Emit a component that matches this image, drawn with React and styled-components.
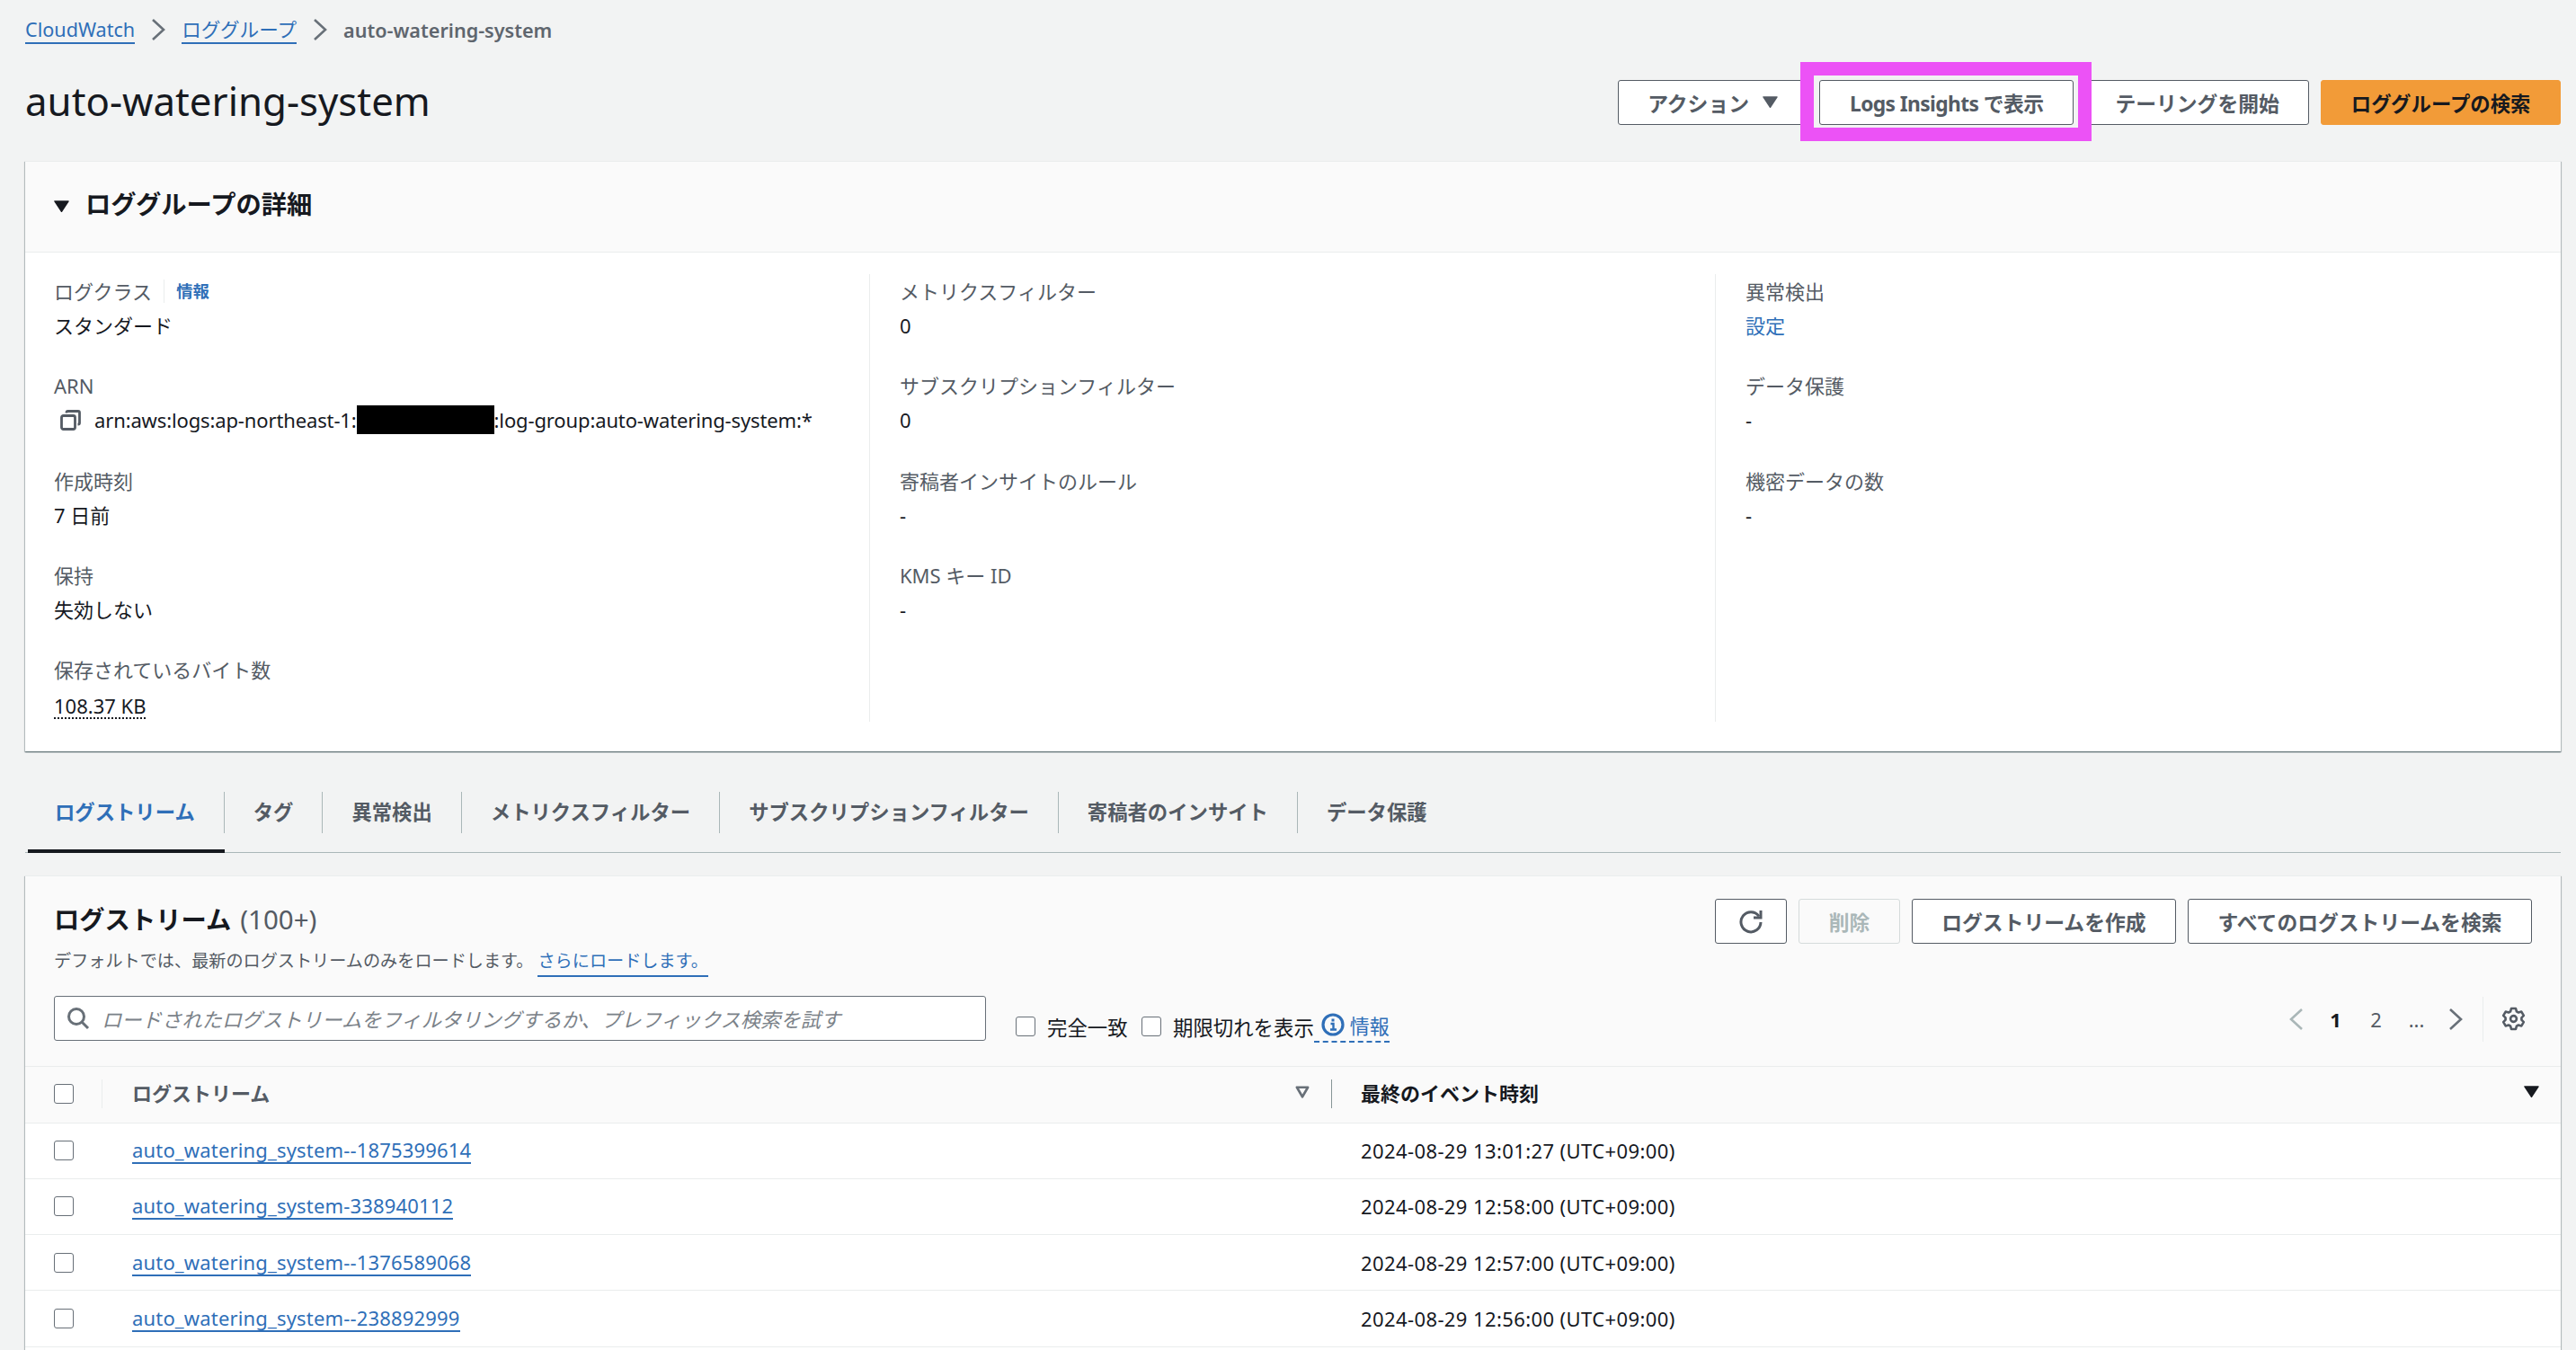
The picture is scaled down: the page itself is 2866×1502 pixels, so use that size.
import React from "react";
import styled, { createGlobalStyle } from "styled-components";

const Global = createGlobalStyle`
  html, body { margin: 0; padding: 0; background: #f2f3f3; }
  body {
    font-family: "Noto Sans", "Noto Sans CJK JP", sans-serif;
    font-size: 22px;
    color: #16191f;
    overflow: hidden;
  }
  * { box-sizing: border-box; }
`;

const Page = styled.div`
  width: 2866px;
  height: 1502px;
  overflow: hidden;
  padding: 0 17px 0 28px;
`;

const Crumbs = styled.nav`
  height: 66px;
  display: flex;
  align-items: center;
  gap: 18px;
  font-size: 21.6px;
`;
const CrumbLink = styled.a`
  color: #2f6fb8;
  border-bottom: 2px solid #2f6fb8;
  line-height: 28px;
  margin-top: 1px;
`;
const CrumbCurrent = styled.span`
  color: #5f666e;
  font-weight: 600;
`;

const HeaderRow = styled.header`
  margin-top: 23px;
  height: 50px;
  display: flex;
  justify-content: space-between;
  align-items: center;
`;
const Title = styled.h1`
  margin: 0 0 5px;
  font-size: 43.8px;
  font-weight: 400;
  line-height: 50px;
`;
const ButtonRow = styled.div`
  display: flex;
  gap: 13px;
  align-items: center;
`;
const Button = styled.button`
  height: 50px;
  padding: 0 32.5px;
  border: 1.5px solid ${(p) => (p.$disabled ? "#d5dbdb" : p.$primary ? "#f29b38" : "#545b64")};
  border-radius: 3px;
  background: ${(p) => (p.$disabled ? "#fafafa" : p.$primary ? "#f29b38" : "#fff")};
  color: ${(p) => (p.$disabled ? "#aab7b8" : p.$primary ? "#16191f" : "#545b64")};
  font: 700 ${(p) => (p.$primary ? "22.4px" : "22.8px")} "Noto Sans", "Noto Sans CJK JP", sans-serif;
  display: inline-flex;
  align-items: center;
  gap: 15px;
  white-space: nowrap;
`;
const LogsButton = styled(Button)`
  letter-spacing: -0.6px;
`;
const IconButton = styled(Button)`
  padding: 0;
  width: 80px;
  justify-content: center;
`;
const RingHolder = styled.div`
  position: relative;
  display: flex;
`;
const Ring = styled.div`
  position: absolute;
  left: -21px;
  right: -20px;
  top: -20px;
  bottom: -18px;
  border: 15px solid #ec52f6;
  pointer-events: none;
  z-index: 2;
`;

const Card = styled.section`
  background: #fff;
  box-shadow: 0 1px 1px 0 rgba(0, 28, 36, 0.4), 1px 1px 1px 0 rgba(0, 28, 36, 0.2),
    -1px 1px 1px 0 rgba(0, 28, 36, 0.2);
  border-top: 1px solid #eaeded;
  margin-top: ${(p) => p.$top}px;
  padding-bottom: ${(p) => p.$bottom || 0}px;
`;
const CardHead = styled.div`
  height: 101px;
  background: #fafafa;
  border-bottom: 1px solid #eaeded;
  padding: 0 32px;
  display: flex;
  align-items: center;
  gap: 18px;
`;
const CardTitle = styled.h2`
  margin: 0 0 7px;
  font-size: 28.3px;
  font-weight: 700;
  line-height: 40px;
`;
const Details = styled.div`
  padding: 24px 0 33px 32px;
  display: grid;
  grid-template-columns: repeat(3, 908px);
  column-gap: 33px;
`;
const Column = styled.div`
  height: 498px;
  border-right: ${(p) => (p.$last ? "none" : "1px solid #eaeded")};
  display: flex;
  flex-direction: column;
  gap: 29.25px;
`;
const Item = styled.div`
  display: flex;
  flex-direction: column;
`;
const Label = styled.div`
  line-height: 38px;
  height: 38px;
  color: #545b64;
  display: flex;
  align-items: center;
`;
const Value = styled.div`
  line-height: 38px;
  height: 38px;
  display: flex;
  align-items: center;
`;
const InfoLink = styled.a`
  color: #2f6fb8;
  font-size: 18.4px;
  font-weight: 700;
  border-left: 1px solid #eaeded;
  margin-left: 13px;
  padding-left: 13px;
  line-height: 26px;
`;
const PlainLink = styled.a`
  color: #2f6fb8;
`;
const Masked = styled.span`
  display: inline-block;
  width: 153px;
  height: 32px;
  background: #000;
`;
const ArnText = styled.span`
  letter-spacing: -0.13px;
`;
const Dotted = styled.span`
  border-bottom: 2px dotted #16191f;
  line-height: 26px;
  margin-top: 5px;
`;
const CopyWrap = styled.span`
  display: inline-flex;
  margin: 0 15px 0 7px;
`;

const Tabs = styled.div`
  margin-top: 45px;
  display: flex;
  padding-left: 1px;
  border-bottom: 1px solid #aab7b8;
  height: 68px;
`;
const Tab = styled.div`
  height: 68px;
  padding-bottom: 18px;
  margin-left: ${(p) => (p.$active ? "2px" : "0")};
  border-bottom: 4px solid ${(p) => (p.$active ? "#16191f" : "transparent")};
`;
const TabLabel = styled.div`
  height: 46px;
  padding: 0 32px 3px ${(p) => (p.$active ? "30px" : "32px")};
  display: flex;
  align-items: center;
  font-size: 22.35px;
  font-weight: 700;
  color: ${(p) => (p.$active ? "#2f6fb8" : "#545b64")};
  border-right: ${(p) => (p.$last ? "none" : "1px solid #aab7b8")};
`;

const Top = styled.div`
  height: 211.5px;
  background: #fafafa;
  border-bottom: 1px solid #eaeded;
  padding: 25px 32px 0;
`;
const TopRow = styled.div`
  display: flex;
  justify-content: space-between;
  align-items: flex-start;
`;
const StreamTitle = styled.h2`
  margin: 0;
  font-size: 28.3px;
  font-weight: 700;
  line-height: 46px;
  display: flex;
  gap: 10px;
`;
const Count = styled.span`
  font-weight: 400;
  font-size: 29.5px;
  color: #545b64;
`;
const Desc = styled.div`
  margin-top: 8px;
  font-size: 19.15px;
  line-height: 30px;
  color: #545b64;
`;
const DescLink = styled.a`
  color: #2f6fb8;
  border-bottom: 2px solid #2f6fb8;
  margin-left: 5px;
  padding-bottom: 3px;
`;
const FilterRow = styled.div`
  margin-top: 24px;
  height: 51px;
  display: flex;
`;
const Search = styled.div`
  width: 1037px;
  height: 50px;
  background: #fff;
  border: 1.5px solid #687078;
  border-radius: 3px;
  padding: 0 13px;
  display: flex;
  align-items: center;
  gap: 13px;
`;
const Placeholder = styled.span`
  font-size: 22.3px;
  font-style: italic;
  color: #7b8289;
`;
const Checks = styled.div`
  margin-left: 33px;
  padding-top: 18px;
  display: flex;
  align-items: center;
  height: 50px;
`;
const Check = styled.span`
  width: 22px;
  height: 22px;
  flex: none;
  background: #fff;
  border: 1.5px solid #687078;
  border-radius: 3px;
  display: block;
`;
const CheckLabel = styled.span`
  margin: 0 15.5px 0 13px;
  font-size: 22.4px;
  white-space: nowrap;
`;
const InfoGroup = styled.a`
  display: inline-flex;
  align-items: center;
  gap: 6px;
  color: #2f6fb8;
  margin-left: -15.5px;
  border-bottom: 2px dashed #2f6fb8;
  height: 36px;
  padding: 0 0 3px 8px;
`;
const Pager = styled.div`
  margin-left: auto;
  height: 51px;
  display: flex;
  align-items: center;
`;
const PageNo = styled.span`
  width: 45px;
  text-align: center;
  margin: ${(p) => (p.$first ? "0 0 0 13px" : p.$last ? "0 13px 0 0" : "0")};
  font-weight: ${(p) => (p.$on ? 700 : 400)};
  color: ${(p) => (p.$on ? "#16191f" : "#545b64")};
`;
const PagerSettings = styled.div`
  margin-left: 22px;
  padding: 0 7px 0 20px;
  border-left: 1px solid #eaeded;
  height: 50px;
  display: flex;
  align-items: center;
`;

const HeadRow = styled.div`
  height: 63px;
  padding-bottom: 2px;
  background: #fafafa;
  border-bottom: 1px solid #eaeded;
  display: flex;
  align-items: center;
  font-weight: 700;
`;
const Row = styled.div`
  height: 62.25px;
  border-bottom: 1px solid #eaeded;
  display: flex;
  align-items: center;
`;
const SelectCell = styled.div`
  width: 86px;
  height: ${(p) => (p.$head ? "32px" : "auto")};
  padding-left: 32px;
  display: flex;
  align-items: center;
  border-right: ${(p) => (p.$head ? "1px solid #eaeded" : "1px solid transparent")};
`;
const NameCell = styled.div`
  width: 1368px;
  height: ${(p) => (p.$head ? "32px" : "auto")};
  padding: 0 24px ${(p) => (p.$head ? "3px" : "0")} 33px;
  display: flex;
  align-items: center;
  justify-content: space-between;
  color: ${(p) => (p.$head ? "#545b64" : "inherit")};
  border-right: ${(p) => (p.$head ? "1px solid #879596" : "1px solid transparent")};
`;
const TimeCell = styled.div`
  flex: 1;
  padding: 0 24px ${(p) => (p.$head ? "3px" : "0")} 32px;
  display: flex;
  align-items: center;
  justify-content: space-between;
  letter-spacing: ${(p) => (p.$head ? "0" : "0.4px")};
`;
const StreamLink = styled.a`
  color: #2f6fb8;
  border-bottom: 2px solid #2f6fb8;
  line-height: 28px;
  letter-spacing: 0.17px;
`;

const Chevron = ({ dir = "right", color = "#687078" }) => (
  <svg width="16" height="24" viewBox="0 0 16 24" fill="none" stroke={color} strokeWidth="2.6">
    <polyline points={dir === "right" ? "2,1 14,12 2,23" : "14,1 2,12 14,23"} />
  </svg>
);
const Down = ({ color = "#16191f", size = 17 }) => (
  <svg width={size} height={size * 0.78} viewBox="0 0 18 14">
    <path d="M1 1h16L9 13z" fill={color} stroke={color} strokeWidth="1.5" strokeLinejoin="round" />
  </svg>
);
const DownOutline = () => (
  <svg width="16" height="14" viewBox="0 0 18 16" fill="none" stroke="#687078" strokeWidth="3" strokeLinejoin="round">
    <path d="M2 2h14L9 14z" />
  </svg>
);
const CopyIcon = () => (
  <svg width="23" height="23" viewBox="0 0 23 23" fill="none" stroke="#545b64" strokeWidth="2.8" strokeLinejoin="round">
    <rect x="1.5" y="6.5" width="15" height="15" rx="2" />
    <path d="M7 3.5V3a1.5 1.5 0 0 1 1.5-1.5H20A1.5 1.5 0 0 1 21.5 3v11.5a1.5 1.5 0 0 1-1.5 1.5h-.5" />
  </svg>
);
const SearchIcon = () => (
  <svg width="26" height="26" viewBox="0 0 26 26" fill="none" stroke="#687078" strokeWidth="3">
    <circle cx="11" cy="11" r="8.5" />
    <path d="M17 17l7 7" />
  </svg>
);
const RefreshIcon = () => (
  <svg width="28" height="28" viewBox="0 0 28 28" fill="none" stroke="#545b64" strokeWidth="3">
    <path d="M23 8.5A11 11 0 1 0 25 15" />
    <path d="M25 2v8h-8" />
  </svg>
);
const InfoIcon = () => (
  <svg width="26" height="26" viewBox="0 0 26 26" fill="none" stroke="#2f6fb8" strokeWidth="3.2">
    <circle cx="13" cy="13" r="11" />
    <path d="M10.5 12H13.5V18.5M10 18.5h7" strokeWidth="2.4" />
    <path d="M13 6.5v3" strokeWidth="3" />
  </svg>
);
const GearIcon = () => (
  <svg width="27" height="27" viewBox="0 0 27 27" fill="none" stroke="#545b64" strokeWidth="2.6" strokeLinejoin="round">
    <circle cx="13.5" cy="13.5" r="3.4" />
    <path d="M11 2h5l.9 3.3 2.1 1.2 3.3-.9 2.5 4.3-2.4 2.4v2.4l2.4 2.4-2.5 4.3-3.3-.9-2.1 1.2L16 25h-5l-.9-3.3L8 20.5l-3.3.9-2.5-4.3 2.4-2.4v-2.4L2.2 9.9l2.5-4.3 3.3.9 2.1-1.2z" />
  </svg>
);

const columns = [
  [
    { label: "ログクラス", info: true, value: "スタンダード" },
    {
      label: "ARN",
      value: (
        <>
          <CopyWrap><CopyIcon /></CopyWrap>
          <ArnText>arn:aws:logs:ap-northeast-1:</ArnText>
          <Masked />
          <ArnText>:log-group:auto-watering-system:*</ArnText>
        </>
      ),
    },
    { label: "作成時刻", value: "7 日前" },
    { label: "保持", value: "失効しない" },
    { label: "保存されているバイト数", value: <Dotted>108.37 KB</Dotted> },
  ],
  [
    { label: "メトリクスフィルター", value: "0" },
    { label: "サブスクリプションフィルター", value: "0" },
    { label: "寄稿者インサイトのルール", value: "-" },
    { label: "KMS キー ID", value: "-" },
  ],
  [
    { label: "異常検出", value: <PlainLink>設定</PlainLink> },
    { label: "データ保護", value: "-" },
    { label: "機密データの数", value: "-" },
  ],
];

const tabs = [
  "ログストリーム",
  "タグ",
  "異常検出",
  "メトリクスフィルター",
  "サブスクリプションフィルター",
  "寄稿者のインサイト",
  "データ保護",
];

const rows = [
  ["auto_watering_system--1875399614", "2024-08-29 13:01:27 (UTC+09:00)"],
  ["auto_watering_system-338940112", "2024-08-29 12:58:00 (UTC+09:00)"],
  ["auto_watering_system--1376589068", "2024-08-29 12:57:00 (UTC+09:00)"],
  ["auto_watering_system--238892999", "2024-08-29 12:56:00 (UTC+09:00)"],
];

export default function App() {
  return (
    <Page>
      <Global />
      <Crumbs>
        <CrumbLink>CloudWatch</CrumbLink>
        <Chevron />
        <CrumbLink>ロググループ</CrumbLink>
        <Chevron />
        <CrumbCurrent>auto-watering-system</CrumbCurrent>
      </Crumbs>

      <HeaderRow>
        <Title>auto-watering-system</Title>
        <ButtonRow>
          <Button>アクション <Down color="#545b64" /></Button>
          <RingHolder>
            <LogsButton>Logs Insights で表示</LogsButton>
            <Ring />
          </RingHolder>
          <Button>テーリングを開始</Button>
          <Button $primary>ロググループの検索</Button>
        </ButtonRow>
      </HeaderRow>

      <Card $top={40}>
        <CardHead>
          <Down />
          <CardTitle>ロググループの詳細</CardTitle>
        </CardHead>
        <Details>
          {columns.map((col, i) => (
            <Column key={i} $last={i === 2}>
              {col.map((it) => (
                <Item key={it.label}>
                  <Label>
                    {it.label}
                    {it.info && <InfoLink>情報</InfoLink>}
                  </Label>
                  <Value>{it.value}</Value>
                </Item>
              ))}
            </Column>
          ))}
        </Details>
      </Card>

      <Tabs>
        {tabs.map((t, i) => (
          <Tab key={t} $active={i === 0}>
            <TabLabel $active={i === 0} $last={i === tabs.length - 1}>{t}</TabLabel>
          </Tab>
        ))}
      </Tabs>

      <Card $top={25} $bottom={40}>
        <Top>
          <TopRow>
            <div>
              <StreamTitle>ログストリーム <Count>(100+)</Count></StreamTitle>
              <Desc>
                デフォルトでは、最新のログストリームのみをロードします。
                <DescLink>さらにロードします。</DescLink>
              </Desc>
            </div>
            <ButtonRow>
              <IconButton aria-label="更新"><RefreshIcon /></IconButton>
              <Button $disabled>削除</Button>
              <Button>ログストリームを作成</Button>
              <Button>すべてのログストリームを検索</Button>
            </ButtonRow>
          </TopRow>
          <FilterRow>
            <Search>
              <SearchIcon />
              <Placeholder>ロードされたログストリームをフィルタリングするか、プレフィックス検索を試す</Placeholder>
            </Search>
            <Checks>
              <Check />
              <CheckLabel>完全一致</CheckLabel>
              <Check />
              <CheckLabel>期限切れを表示</CheckLabel>
              <InfoGroup><InfoIcon />情報</InfoGroup>
            </Checks>
            <Pager>
              <Chevron dir="left" color="#aab7b8" />
              <PageNo $on $first>1</PageNo>
              <PageNo>2</PageNo>
              <PageNo $last>...</PageNo>
              <Chevron />
              <PagerSettings><GearIcon /></PagerSettings>
            </Pager>
          </FilterRow>
        </Top>
        <HeadRow>
          <SelectCell $head><Check /></SelectCell>
          <NameCell $head>ログストリーム <DownOutline /></NameCell>
          <TimeCell $head>最終のイベント時刻 <Down /></TimeCell>
        </HeadRow>
        {rows.map(([name, time]) => (
          <Row key={name}>
            <SelectCell><Check /></SelectCell>
            <NameCell><StreamLink>{name}</StreamLink></NameCell>
            <TimeCell>{time}</TimeCell>
          </Row>
        ))}
      </Card>
    </Page>
  );
}
